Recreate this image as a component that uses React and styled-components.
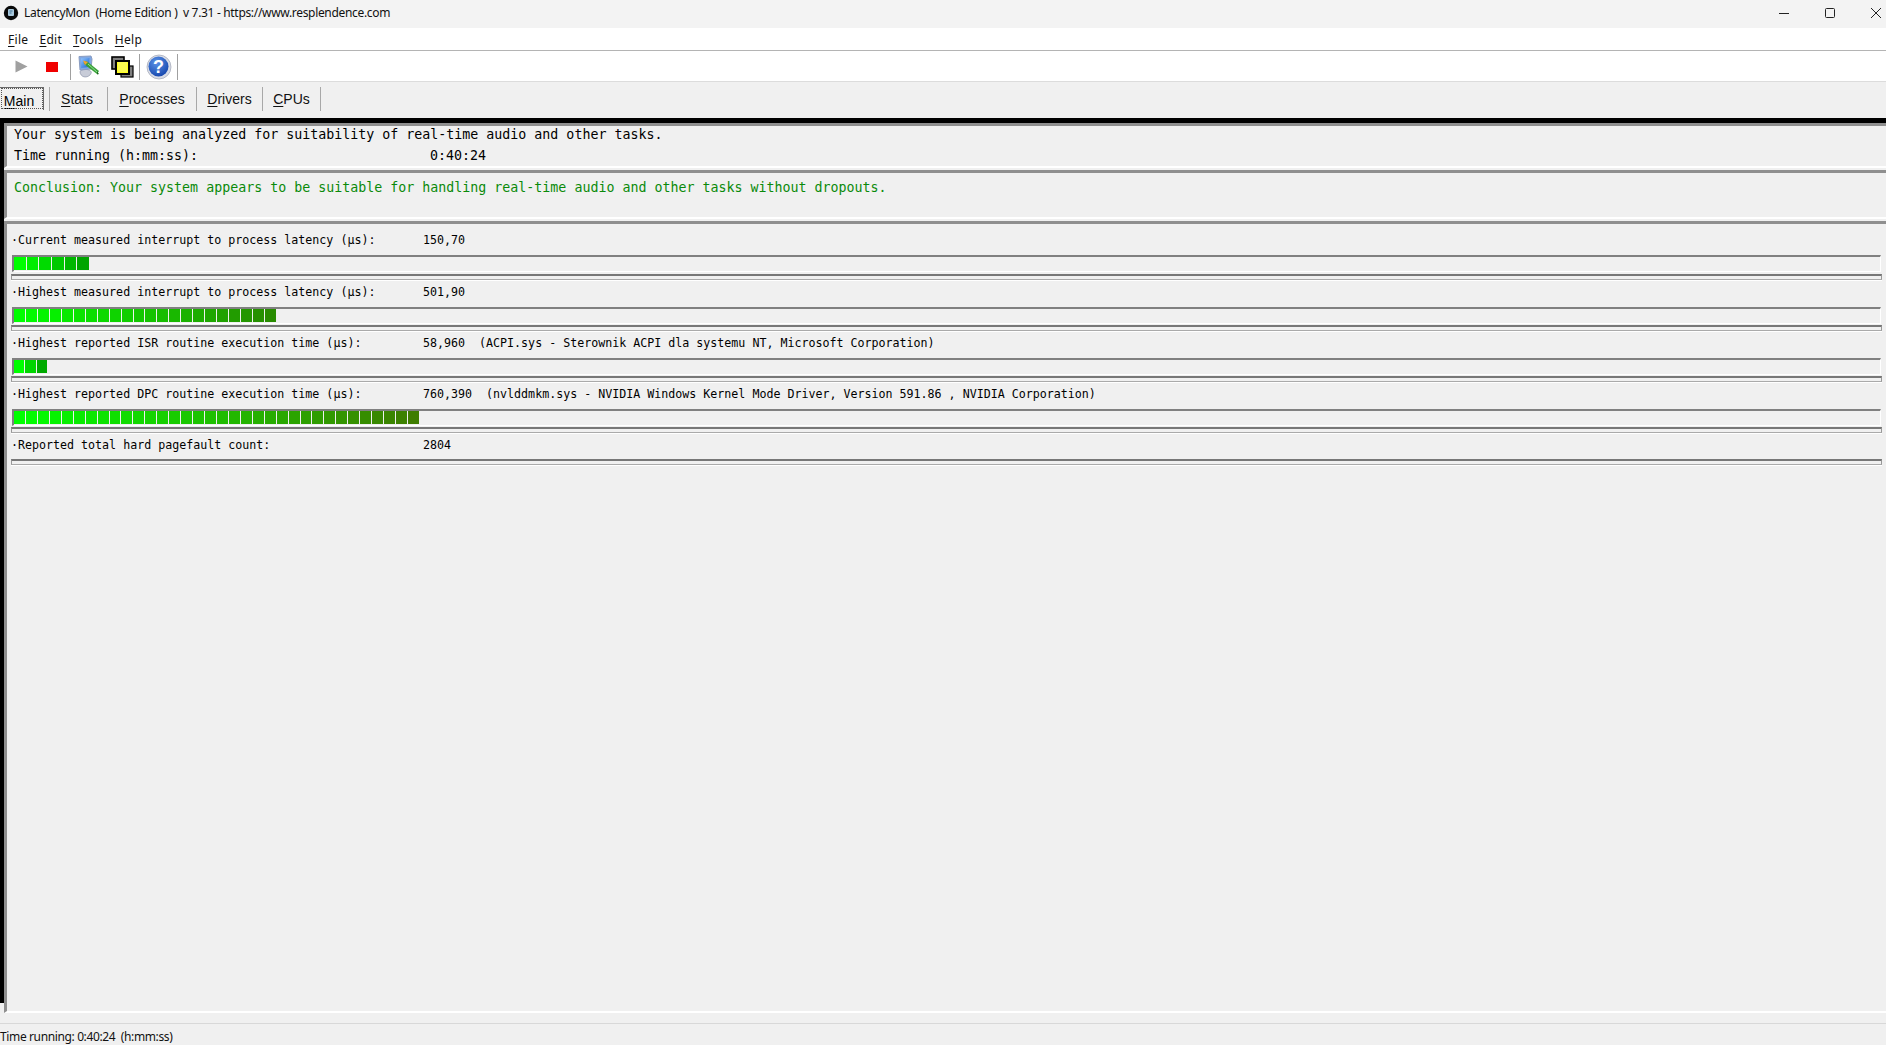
import React from "react";
import styled, { createGlobalStyle } from "styled-components";

const Global = createGlobalStyle`
  html, body { margin: 0; padding: 0; height: 100%; overflow: hidden; background: #f0f0f0; }
  #root { height: 100%; }
`;
const Window = styled.div`display:flex;flex-direction:column;width:1886px;height:1045px;overflow:hidden;background:#f0f0f0;color:#000;`;
const TitleBar = styled.div`display:flex;align-items:center;height:28px;padding-bottom:2px;box-sizing:border-box;flex:none;background:#f3f3f3;padding-left:3px;font:12px/16px "Noto Sans",sans-serif;color:#111;`;
const TitleText = styled.span`margin-left:5px;white-space:pre;letter-spacing:-0.32px;`;
const Controls = styled.div`margin-left:auto;display:flex;align-items:center;height:100%;padding-right:4px;gap:34px;`;
const MenuBar = styled.div`display:flex;flex:none;height:23px;padding-top:1px;box-sizing:border-box;align-items:center;background:#fff;border-bottom:1px solid #b4b4b4;padding-left:8px;gap:11px;font:12px/16px "Noto Sans",sans-serif;letter-spacing:.3px;`;
const MenuItem = styled.span`color:#111;`;
const Toolbar = styled.div`display:flex;flex:none;height:31px;box-sizing:border-box;padding-top:1px;align-items:center;background:#fff;border-bottom:1px solid #dcdcdc;`;
const ToolSlot = styled.div`display:flex;align-items:center;justify-content:center;flex:none;width:${p=>p.$w}px;height:100%;padding-left:${p=>p.$pl||0}px;box-sizing:border-box;margin-right:${p=>p.$mr||0}px;`;
const ToolSep = styled.div`flex:none;width:1px;height:26px;background:#a0a0a0;`;
const TabBar = styled.div`display:flex;flex:none;height:36px;padding-top:5px;box-sizing:border-box;align-items:flex-start;font:14px/16px "Liberation Sans",Arial,sans-serif;`;
const Tab = styled.div`flex:none;box-sizing:border-box;width:${p=>p.$w}px;height:24px;padding-right:${p=>p.$pr||0}px;display:flex;align-items:center;justify-content:center;border-right:1px solid #a8a8a8;color:#111;`;
const ActiveWrap = styled.div`flex:none;width:50px;height:24px;border-right:1px solid #a8a8a8;box-sizing:border-box;`;
const ActiveTab = styled.div`box-sizing:border-box;width:44px;height:23px;border-top:1px solid #696969;border-right:1px solid #696969;background:#f0f0f0;display:flex;align-items:center;justify-content:center;padding:3px 5px 0 0;outline:1px dotted #555;outline-offset:-2px;`;
const Content = styled.div`flex:1;min-height:0;display:flex;flex-direction:column;padding-left:4px;border-top:5px solid #000;
  background:linear-gradient(#000,#000) left top/4px calc(100% - 10px) no-repeat;margin-bottom:10px;`;
const Panel = styled.div`box-sizing:border-box;flex:${p=>p.$grow?"1":"none"};height:${p=>p.$h?p.$h+"px":"auto"};margin-bottom:${p=>p.$gap||0}px;
  border-top:3px solid #8f8f8f;border-left:3px solid #8f8f8f;border-bottom:2px solid #fff;font-family:"DejaVu Sans Mono",monospace;white-space:pre;`;
const InfoLines = styled.div`display:flex;flex-direction:column;gap:5px;padding:${p=>p.$top}px 0 0 7px;font-size:13.3px;line-height:16px;`;
const Green = styled.span`color:#0a8a0a;`;
const TimeLabel = styled.span`display:inline-block;width:416px;`;
const Rows = styled.div`padding:8px 5px 0 4px;font-size:11.65px;line-height:16px;`;
const Row = styled.div`margin-bottom:${p=>p.$last?0:4}px;`;
const Label = styled.div`display:flex;`;
const LabelName = styled.span`flex:none;width:412px;`;
const Gauge = styled.div`box-sizing:border-box;height:17px;margin-top:7px;margin-left:1px;padding-bottom:1px;border-top:2px solid #808080;border-left:2px solid #808080;border-bottom:1px solid #fff;border-right:1px solid #fff;display:flex;`;
const Segments = styled.div`display:flex;gap:1px;height:100%;width:${p=>p.$w}px;`;
const Segment = styled.div`flex:1;`;
const Outline = styled.div`box-sizing:border-box;height:6px;margin-top:${p=>p.$m}px;margin-right:-1px;border-top:2px solid #777;border-left:1px solid #999;border-right:1px solid #999;border-bottom:1px solid #aaa;box-shadow:0 1px 0 #fff;`;
const StatusBar = styled.div`flex:none;height:22px;box-sizing:border-box;border-top:1px solid #d8d8d8;font:12px/26px "Noto Sans",sans-serif;color:#111;white-space:pre;letter-spacing:-0.37px;`;
const U = styled.span`text-decoration:underline;text-underline-offset:2px;`;

const AppIcon = () => (
  <svg width="16" height="16" viewBox="0 0 16 16">
    <circle cx="8" cy="8" r="7.2" fill="#0a0a0a" />
    <rect x="5" y="4" width="6" height="7" rx="1" fill="#a9c9dd" />
    <path d="M6.5 6h3M6.5 8h2" stroke="#3c6e90" />
  </svg>
);
const Minimize = () => <svg width="12" height="12" viewBox="0 0 12 12"><path d="M1 6.5h10" stroke="#222" /></svg>;
const Maximize = () => <svg width="12" height="12" viewBox="0 0 12 12"><rect x="1.5" y="1.5" width="9" height="9" rx="1" fill="none" stroke="#222" /></svg>;
const Close = () => <svg width="12" height="12" viewBox="0 0 12 12"><path d="M1 1l10 10M11 1L1 11" stroke="#222" /></svg>;
const Play = () => <svg width="13" height="13" viewBox="0 0 13 13"><path d="M0.5 0.5L12.5 6.5L0.5 12.5Z" fill="#a0a0a0" /></svg>;
const Stop = () => <svg width="12" height="10" viewBox="0 0 12 10"><rect width="12" height="10" fill="#f00000" /></svg>;
const Monitor = () => (
  <svg width="24" height="24" viewBox="0 0 24 24">
    <defs><linearGradient id="scr" x1="0" y1="0" x2="1" y2="1"><stop offset="0" stopColor="#8ec4ff" /><stop offset="1" stopColor="#1a62d0" /></linearGradient></defs>
    <path d="M3 17c0-2 4-3 7-2.5s5 2 4 4-3 3.5-6 3.5-5-3-5-5z" fill="#c8ccd8" stroke="#8088a0" strokeWidth=".6" />
    <path d="M2 1.5L14 1l1 3-1 10-11 1z" fill="#7fa8e4" stroke="#8a9cc0" />
    <path d="M4 3.5l8.5-.5-.5 9-8 1z" fill="url(#scr)" />
    <path d="M8 6l2.5.7L22 16l-2 3-10.5-8-3-3z" fill="#3aa03a" />
    <path d="M6 5.5l5 1.5-3 3z" fill="#f0a030" />
    <path d="M11 9l9 8" stroke="#8fe08f" strokeWidth="1" />
    <path d="M20 16.5l2 2.5-2 .5z" fill="#1c6a1c" />
  </svg>
);
const Squares = () => (
  <svg width="23" height="22" viewBox="0 0 23 22">
    <rect x="1" y="1" width="12" height="12" fill="#808080" stroke="#000" strokeWidth="1.6" />
    <rect x="10" y="10" width="12" height="11" fill="#808080" stroke="#000" strokeWidth="1.2" />
    <rect x="5" y="5" width="13" height="13" fill="#ffff20" stroke="#000" strokeWidth="2" />
    <path d="M7 7h9M7 9h9M7 11h9M7 13h9M7 15h9" stroke="#f0f0b0" strokeWidth=".7" />
  </svg>
);
const Help = () => (
  <svg width="26" height="26" viewBox="0 0 26 26">
    <defs><radialGradient id="hb" cx=".4" cy=".3" r=".8"><stop offset="0" stopColor="#5c94e8" /><stop offset="1" stopColor="#0f3fa8" /></radialGradient></defs>
    <circle cx="13" cy="13" r="12" fill="#d8dce6" stroke="#a8adbc" strokeWidth=".8" />
    <circle cx="12.5" cy="12.5" r="10" fill="url(#hb)" />
    <text x="12.5" y="19" textAnchor="middle" fontFamily="Liberation Sans" fontWeight="700" fontSize="18" fill="#fff">?</text>
  </svg>
);

const rows = [
  { name: "·Current measured interrupt to process latency (µs):", value: "150,70", n: 6, w: 75, end: [0, 165, 0], m: 2 },
  { name: "·Highest measured interrupt to process latency (µs):", value: "501,90", n: 22, w: 262, end: [40, 140, 0], m: 1 },
  { name: "·Highest reported ISR routine execution time (µs):", value: "58,960  (ACPI.sys - Sterownik ACPI dla systemu NT, Microsoft Corporation)", n: 3, w: 33, end: [0, 170, 0], m: 1 },
  { name: "·Highest reported DPC routine execution time (µs):", value: "760,390  (nvlddmkm.sys - NVIDIA Windows Kernel Mode Driver, Version 591.86 , NVIDIA Corporation)", n: 34, w: 405, end: [62, 125, 0], m: 1 },
];
const mix = (end, t) => `rgb(${Math.round(end[0] * t)},${Math.round(255 + (end[1] - 255) * t)},${Math.round(end[2] * t)})`;

const Mnemonic = ({ k, rest }) => <span><U>{k}</U>{rest}</span>;

export default function App() {
  return (
    <Window>
      <Global />
      <TitleBar>
        <AppIcon />
        <TitleText>LatencyMon  (Home Edition )  v 7.31 - https://www.resplendence.com</TitleText>
        <Controls><Minimize /><Maximize /><Close /></Controls>
      </TitleBar>
      <MenuBar>
        <MenuItem><Mnemonic k="F" rest="ile" /></MenuItem>
        <MenuItem><Mnemonic k="E" rest="dit" /></MenuItem>
        <MenuItem><Mnemonic k="T" rest="ools" /></MenuItem>
        <MenuItem><Mnemonic k="H" rest="elp" /></MenuItem>
      </MenuBar>
      <Toolbar>
        <ToolSlot $w={42}><Play /></ToolSlot>
        <ToolSlot $w={20} $mr={8}><Stop /></ToolSlot>
        <ToolSep />
        <ToolSlot $w={34} $pl={2}><Monitor /></ToolSlot>
        <ToolSlot $w={34}><Squares /></ToolSlot>
        <ToolSep />
        <ToolSlot $w={37}><Help /></ToolSlot>
        <ToolSep />
      </Toolbar>
      <TabBar>
        <ActiveWrap><ActiveTab><Mnemonic k="M" rest="ain" /></ActiveTab></ActiveWrap>
        <Tab $w={58} $pr={3}><Mnemonic k="S" rest="tats" /></Tab>
        <Tab $w={89}><Mnemonic k="P" rest="rocesses" /></Tab>
        <Tab $w={66}><Mnemonic k="D" rest="rivers" /></Tab>
        <Tab $w={58}><Mnemonic k="C" rest="PUs" /></Tab>
      </TabBar>
      <Content>
        <Panel $h={45} $gap={2}>
          <InfoLines $top={1}>
            <span>Your system is being analyzed for suitability of real-time audio and other tasks.</span>
            <span><TimeLabel>Time running (h:mm:ss):</TimeLabel>0:40:24</span>
          </InfoLines>
        </Panel>
        <Panel $h={49} $gap={2}>
          <InfoLines $top={7}>
            <Green>Conclusion: Your system appears to be suitable for handling real-time audio and other tasks without dropouts.</Green>
          </InfoLines>
        </Panel>
        <Panel $grow>
          <Rows>
            {rows.map((r) => (
              <Row key={r.name}>
                <Label><LabelName>{r.name}</LabelName><span>{r.value}</span></Label>
                <Gauge>
                  <Segments $w={r.w}>
                    {Array.from({ length: r.n }, (_, i) => (
                      <Segment key={i} style={{ background: mix(r.end, r.n > 1 ? i / (r.n - 1) : 0) }} />
                    ))}
                  </Segments>
                </Gauge>
                <Outline $m={r.m} />
              </Row>
            ))}
            <Row $last>
              <Label><LabelName>·Reported total hard pagefault count:</LabelName><span>2804</span></Label>
              <Outline $m={6} />
            </Row>
          </Rows>
        </Panel>
      </Content>
      <StatusBar>Time running: 0:40:24  (h:mm:ss)</StatusBar>
    </Window>
  );
}
